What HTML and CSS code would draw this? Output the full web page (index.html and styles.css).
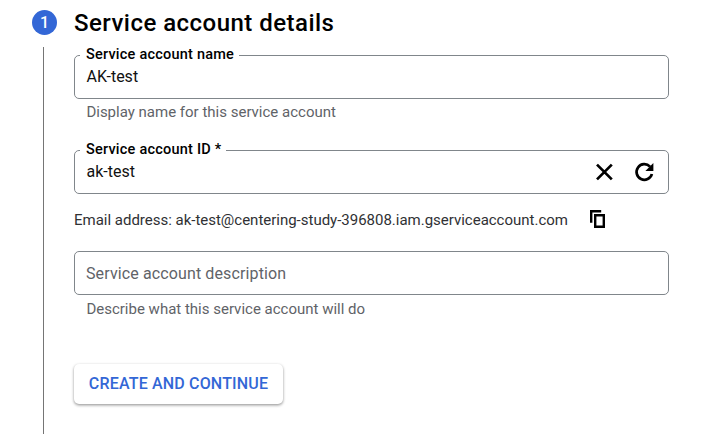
FILE: index.html
```html
<!DOCTYPE html>
<html lang="en">
<head>
<meta charset="utf-8">
<title>Create service account</title>
<link rel="stylesheet" href="styles.css">
</head>
<body>
<main class="step">
  <div class="rail">
    <span class="badge">1</span>
    <span class="line"></span>
  </div>
  <form class="content">
    <h1 class="title">Service account details</h1>
    <fieldset class="field">
      <legend class="name-label">Service account name</legend>
      <div class="value">AK-test</div>
    </fieldset>
    <p class="hint">Display name for this service account</p>
    <fieldset class="field field-id">
      <legend class="id-label">Service account ID *</legend>
      <div class="value">ak-test</div>
      <svg class="icon clear" viewBox="0 0 26 26"><path class="cross" d="M6 5.6 20.8 20.4M20.8 5.6 6 20.4"/></svg>
      <svg class="icon" viewBox="0 0 26 26"><path class="arc" d="M19 7.6A7.8 7.8 0 1 0 20.9 15"/><path d="M22.4 4v8h-8z"/></svg>
    </fieldset>
    <div class="email">
      <span class="email-text">Email address: ak-test@centering-study-396808.iam.gserviceaccount.com</span>
      <svg class="copy" viewBox="0 0 16 18"><path d="M1.2 12.8V1.2H11.2"/><path d="M5.2 5.2h8.6v11.6H5.2z"/></svg>
    </div>
    <div class="field-plain"><span class="placeholder">Service account description</span></div>
    <p class="hint hint-description">Describe what this service account will do</p>
    <button class="button" type="button"><span class="button-text">CREATE AND CONTINUE</span></button>
  </form>
</main>
</body>
</html>
```
FILE: styles.css
```css
* { box-sizing: border-box; }
body {
  margin: 0;
  background: #fff;
  color: #111;
  font-family: Roboto, sans-serif;
  font-size: 15px;
  overflow: hidden;
}
.step { display: flex; height: 434px; padding-left: 32px; }
.rail { display: flex; flex-direction: column; align-items: center; width: 25px; margin-right: 17px; padding-top: 10px; }
.badge {
  width: 25px; height: 25px; border-radius: 50%;
  background: #3367d6; color: #fff;
  font-size: 16px; font-weight: 500; line-height: 25px; text-align: center;
}
.line { flex: 1; width: 1px; margin: 12px 2px 0 0; background: #757575; }
.content { width: 595px; }
.title { margin: 7px 0 0; font-size: 24px; line-height: 32px; font-weight: 500; letter-spacing: .47px; color: #000; white-space: nowrap; }
.field {
  display: flex; align-items: center;
  margin: 8px 0 0; padding: 0 11px 8px; height: 52px;
  border: 1px solid #80868b; border-radius: 5px;
  min-width: 0;
}
.field legend {
  padding: 0 5px 0 6px; margin-left: -6px; height: 17px;
  font-size: 14.5px; line-height: 15px; font-weight: 500; letter-spacing: .22px; white-space: nowrap; color: #000;
}
.value { flex: 1; padding-left: .5px; font-size: 16px; line-height: 20px; }
.hint { margin: 3px 0 0 12.4px; font-size: 15px; line-height: 20px; color: #5f6368; white-space: nowrap; }
.field-id { margin-top: 20px; }
.icon { width: 26px; height: 26px; fill: #000; }
.clear { margin-right: 14px; }
.cross, .arc { fill: none; stroke: #000; stroke-width: 2.7; }
.email { display: flex; align-items: center; height: 20px; margin-top: 16px; white-space: nowrap; color: #303134; }
.email-text { width: 494px; letter-spacing: -.01px; }
.copy { width: 16px; height: 18px; margin: -2px 0 0 22px; fill: none; stroke: #000; stroke-width: 2.4; }
.field-plain { display: flex; align-items: center; height: 44px; margin-top: 21px; padding-left: 11px; border: 1px solid #80868b; border-radius: 5px; }
.placeholder { font-size: 16px; letter-spacing: .12px; color: #5f6368; }
.hint-description { margin-top: 4px; }
.button {
  display: block; width: 209px; height: 40px; margin-top: 45px; padding: 0;
  border: 0; border-radius: 5px; background: #fff;
  box-shadow: 0 1px 3px rgba(0,0,0,.35), 0 2px 3px rgba(0,0,0,.1);
  color: #3367d6; font: 500 16px/40px Roboto, sans-serif; letter-spacing: .17px; white-space: nowrap;
}
.button-text { display: block; height: 40px; }
```
